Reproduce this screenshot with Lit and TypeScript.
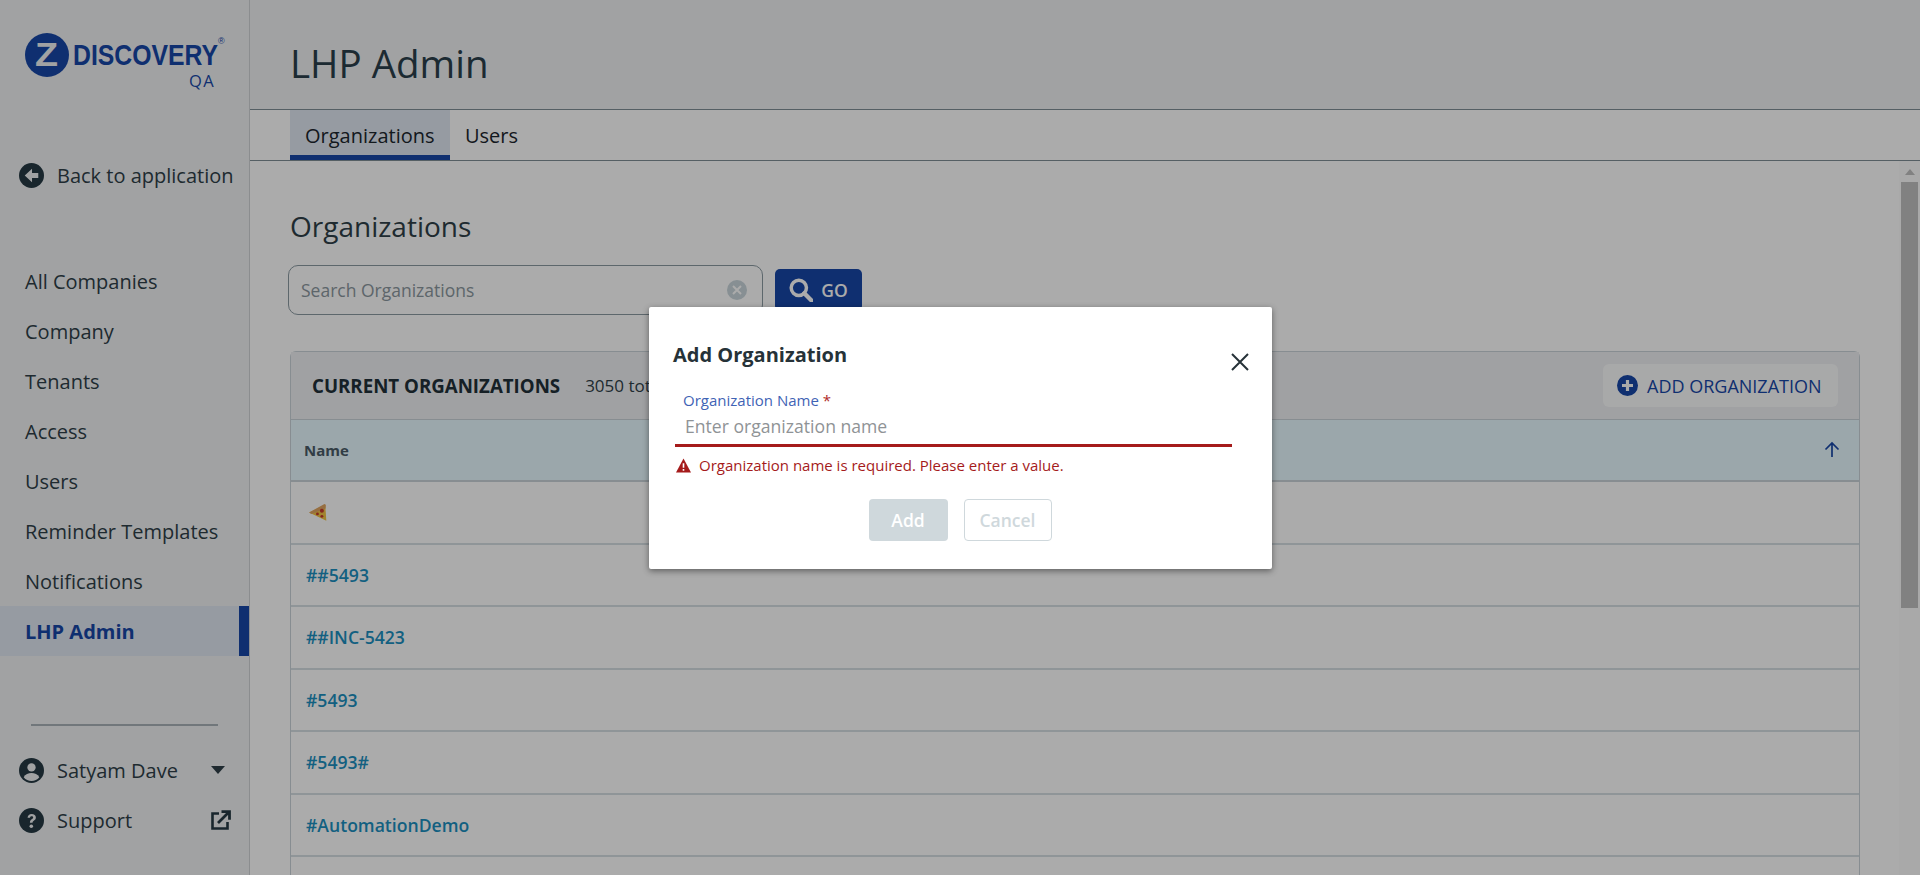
import { LitElement, html, css } from "lit";
import { customElement } from "lit/decorators.js";

const NAV = ["All Companies", "Company", "Tenants", "Access", "Users", "Reminder Templates", "Notifications", "LHP Admin"];
const ROWS = ["##5493", "##INC-5423", "#5493", "#5493#", "#AutomationDemo", ""];

@customElement("app-root")
export class AppRoot extends LitElement {
  static styles = css`
    :host { display: block; position: relative; width: 1920px; height: 875px; overflow: hidden; background: #fff;
      font-family: "Open Sans", "Noto Sans", sans-serif; color: #2f3f48; }
    * { box-sizing: border-box; }
    .page { display: flex; height: 875px; }
    .side { width: 250px; flex: none; background: #f0f2f4; border-right: 1px solid #cfd3d6; display: flex; flex-direction: column; }
    .logo { height: 110px; padding: 30px 0 0 23px; flex: none; }
    .logo svg { display: block; }
    .back { display: flex; align-items: center; gap: 13px; margin: 51px 0 0 19px; height: 28px; font-size: 20px; white-space: nowrap; }
    .back svg, .foot svg.c { width: 25px; height: 25px; flex: none; }
    .nav { margin-top: 67px; }
    .nav div { height: 50px; padding-left: 25px; display: flex; align-items: center; font-size: 20px; }
    .nav .on { background: #e0e8f2; color: #1747a7; font-weight: 700; border-right: 10px solid #1747a7; }
    .rule { height: 2px; background: #a9b2b8; margin: 68px 0 0 31px; width: 187px; }
    .foot { display: flex; align-items: center; margin: 0 0 0 19px; height: 50px; font-size: 20px; }
    .foot span { margin-left: 13px; flex: 1; }
    .foot.first { margin-top: 19px; }
    .caret { width: 0; height: 0; border: 7.5px solid transparent; border-top: 8px solid #2f3f48; border-bottom: 0; margin-right: 24px; }
    .ext { width: 21px; height: 21px; margin-right: 18px; }
    .main { flex: 1; min-width: 0; display: flex; flex-direction: column; }
    .head { height: 110px; flex: none; background: #f0f2f4; border-bottom: 1px solid #7f8e96; padding: 40px 0 0 40px; }
    .head h1 { margin: 0; font-size: 38.500px; line-height: 46px; font-weight: 500; color: #2b3f4b; }
    .tabs { height: 51px; flex: none; display: flex; padding-left: 40px; border-bottom: 1px solid #7f8e96; }
    .tab { padding: 0 15px; font-size: 20px; display: flex; align-items: center; height: 50px; color: #1c262d; }
    .tab.on { background: #e0e8f2; border-bottom: 5px solid #1747a7; padding-top: 5px; width: 160px; }
    .body { flex: 1; display: flex; min-height: 0; }
    .content { flex: 1; min-width: 0; padding: 46px 39px 0 40px; overflow: hidden; }
    .content h2 { margin: 0; font-size: 28px; line-height: 38px; font-weight: 400; color: #2f3f48; }
    .search { display: flex; margin: 20px 0 0 -2px; align-items: center; }
    .box { width: 475px; height: 50px; border: 1px solid #8b9aa2; border-radius: 10px; display: flex; align-items: center; padding: 0 15px 0 12px; font-size: 17.500px; color: #8b979e; justify-content: space-between; }
    .clear { width: 20px; height: 20px; }
    .go { margin-left: 12px; width: 87px; height: 42px; background: #1747a7; color: #fff; border-radius: 5px; font-weight: 600; font-size: 17.500px; display: flex; align-items: center; justify-content: center; gap: 8px; }
    .table { margin-top: 36px; border: 1px solid #c9d3d8; border-bottom: 0; border-radius: 6px 6px 0 0; }
    .thead { height: 68px; background: #eff0f3; display: flex; align-items: center; padding: 0 21px 0 21px; border-bottom: 1px solid #c9d3d8; }
    .thead b { font-size: 18.700px; font-weight: 700; color: #223039; }
    .thead .tot { margin-left: 25px; font-size: 17px; color: #2f3f48; flex: 1; }
    .addorg { width: 235px; height: 43px; background: #fbfcfd; border-radius: 6px; display: flex; align-items: center; padding-left: 14px; gap: 9px; font-size: 18px; color: #1747a7; white-space: nowrap; }
    .addorg svg { width: 21px; height: 21px; }
    .cols { height: 62px; background: #e8f9ff; display: flex; align-items: center; justify-content: space-between; padding: 0 18px 0 13px; border-bottom: 2px solid #c9d3d8; font-size: 15px; font-weight: 700; color: #4a5c68; }
    .cols svg { width: 18px; height: 18px; }
    .row { height: 62.500px; padding-left: 15px; display: flex; align-items: center; border-bottom: 2px solid #d6dfe3; font-size: 17.600px; font-weight: 600; color: #1c90c0; }
    .row svg { width: 20px; height: 20px; margin: 1px 0 0 2px; }
    .sb { width: 21px; flex: none; background: #fdfdfd; display: flex; flex-direction: column; align-items: center; }
    .sb i { display: block; width: 0; height: 0; border: 5px solid transparent; border-bottom: 6px solid #c0c0c0; border-top: 0; margin: 8px 0 7px; }
    .sb u { display: block; width: 17px; height: 426px; background: #c0c0c0; }
    .shade { position: absolute; inset: 0; background: rgba(0, 0, 0, .33); }
    .modal { position: absolute; left: 649px; top: 307px; width: 623px; height: 262px; background: #fff; border-radius: 2px;
      box-shadow: 0 2px 6px rgba(0,0,0,.45); padding: 34px 22px 0 24px; display: flex; flex-direction: column; }
    .mtop { display: flex; justify-content: space-between; align-items: flex-start; height: 28px; }
    .mtop h3 { margin: 0; font-size: 20px; line-height: 28px; font-weight: 700; color: #263238; }
    .mtop svg { width: 20px; height: 20px; margin-top: 11px; }
    .label { margin: 21px 0 0 10px; font-size: 15px; line-height: 20px; color: #3f63b5; }
    .label em { color: #b02a2a; font-style: normal; }
    .ph { margin: 4px 0 0 2px; height: 33px; border-bottom: 3px solid #a51b1b; font-size: 17.600px; color: #8f9396; padding-left: 10px; line-height: 24px; width: 557px; }
    .err { display: flex; align-items: center; gap: 8px; margin: 8px 0 0 3px; font-size: 15px; line-height: 20px; color: #a51b1b; }
    .err svg { width: 15px; height: 15px; }
    .btns { display: flex; justify-content: center; gap: 16px; margin-top: 24px; padding-right: 3px; }
    .btn { height: 42px; border-radius: 4px; display: flex; align-items: center; justify-content: center; font-size: 17.500px; font-weight: 600; }
    .btn.a { width: 79px; background: #cfd8dc; color: #fff; }
    .btn.c { width: 88px; border: 1px solid #cfd8dc; color: #cfd8dc; }
  `;

  render() {
    return html`
      <div class="page">
        <aside class="side">
          <div class="logo">
            <svg width="205" height="70" viewBox="0 0 205 70">
              <circle cx="24" cy="25" r="22" fill="#1747a7"></circle>
              <text x="12" y="36" font-family="Liberation Sans" font-weight="700" font-size="33" fill="#f0f2f4" textLength="23" lengthAdjust="spacingAndGlyphs">Z</text>
              <text transform="translate(50 35) scale(.855 1)" font-family="Liberation Sans" font-weight="700" font-size="29" fill="#1747a7">DISCOVERY</text>
              <text x="195" y="14" font-family="Liberation Sans" font-size="9" fill="#1747a7">®</text>
              <text x="166" y="57" font-family="Open Sans" font-weight="500" font-size="16.500" letter-spacing="1.500" fill="#1747a7">QA</text>
            </svg>
          </div>
          <div class="back">
            <svg viewBox="0 0 24 24"><circle cx="12" cy="12" r="12" fill="#263a44"></circle><path d="M12.500 5.500 5.500 12l7 6.500v-4h6v-5h-6z" fill="#f0f2f4"></path></svg>
            Back to application
          </div>
          <nav class="nav">
            ${NAV.map((n, i) => html`<div class=${i === 7 ? "on" : ""}>${n}</div>`)}
          </nav>
          <div class="rule"></div>
          <div class="foot first">
            <svg class="c" viewBox="0 0 24 24"><circle cx="12" cy="12" r="12" fill="#263a44"></circle><circle cx="12" cy="9" r="4" fill="#f0f2f4"></circle><path d="M4.500 18.500c1.500-3 4.500-4 7.500-4s6 1 7.500 4C17.500 21 15 22 12 22s-5.500-1-7.500-3.500z" fill="#f0f2f4"></path></svg>
            <span>Satyam Dave</span><div class="caret"></div>
          </div>
          <div class="foot">
            <svg class="c" viewBox="0 0 24 24"><circle cx="12" cy="12" r="12" fill="#263a44"></circle><path d="M8.200 9.300C8.400 7 10 5.700 12.200 5.700c2.300 0 4 1.400 4 3.400 0 1.500-.8 2.300-2 3.100-1 .7-1.200 1-1.200 2h-2.500c0-1.700.4-2.400 1.700-3.300.9-.6 1.400-1 1.400-1.700 0-.8-.6-1.300-1.500-1.300-1 0-1.500.6-1.600 1.400z" fill="#f0f2f4"></path><circle cx="11.800" cy="17.600" r="1.700" fill="#f0f2f4"></circle></svg>
            <span>Support</span>
            <svg class="ext" viewBox="0 0 21 21"><path d="M9 3.500H2.500v15h15V12" fill="none" stroke="#263a44" stroke-width="2.600"></path><path d="M8 13 18 3M11.500 1.700h8v8" fill="none" stroke="#263a44" stroke-width="2.800"></path></svg>
          </div>
        </aside>
        <div class="main">
          <header class="head"><h1>LHP Admin</h1></header>
          <div class="tabs"><div class="tab on">Organizations</div><div class="tab">Users</div></div>
          <div class="body">
            <div class="content">
              <h2>Organizations</h2>
              <div class="search">
                <div class="box">Search Organizations
                  <svg class="clear" viewBox="0 0 20 20"><circle cx="10" cy="10" r="10" fill="#c9d6dc"></circle><path d="m6 6 8 8M14 6l-8 8" stroke="#fff" stroke-width="2"></path></svg>
                </div>
                <div class="go">
                  <svg width="24" height="24" viewBox="1 1 22 22"><circle cx="10" cy="10" r="7" fill="none" stroke="#fff" stroke-width="3.200"></circle><path d="m15 15 7 7" stroke="#fff" stroke-width="4" stroke-linecap="round"></path></svg>
                  GO
                </div>
              </div>
              <div class="table">
                <div class="thead">
                  <b>CURRENT ORGANIZATIONS</b><span class="tot">3050 total</span>
                  <div class="addorg">
                    <svg viewBox="0 0 21 21"><circle cx="10.500" cy="10.500" r="10.500" fill="#1747a7"></circle><path d="M10.500 5v11M5 10.500h11" stroke="#fbfcfd" stroke-width="3.200"></path></svg>
                    ADD ORGANIZATION
                  </div>
                </div>
                <div class="cols">Name
                  <svg viewBox="0 0 18 18"><path d="M9 16V2M2.500 8.500 9 2l6.500 6.500" fill="none" stroke="#1747a7" stroke-width="1.700"></path></svg>
                </div>
                <div class="row">
                  <svg viewBox="0 0 18 18"><path d="M1 8.500 15.500 1.500 16.500 16z" fill="#f2c443"></path><path d="M1 8.500 14.800 1c.8 0 1.200.7 1.200 1.500L15.800 5 3 10z" fill="#e0a562"></path><circle cx="12.500" cy="7" r="1.800" fill="#c63a2c"></circle><circle cx="8.500" cy="9.800" r="1.300" fill="#c63a2c"></circle><circle cx="12.500" cy="12" r="1.300" fill="#c63a2c"></circle></svg>
                </div>
                ${ROWS.map((r) => html`<div class="row">${r}</div>`)}
              </div>
            </div>
            <div class="sb"><i></i><u></u></div>
          </div>
        </div>
      </div>
      <div class="shade"></div>
      <div class="modal">
        <div class="mtop">
          <h3>Add Organization</h3>
          <svg viewBox="0 0 20 20"><path d="m2 2 16 16M18 2 2 18" stroke="#263238" stroke-width="2" fill="none"></path></svg>
        </div>
        <div class="label">Organization Name <em>*</em></div>
        <div class="ph">Enter organization name</div>
        <div class="err">
          <svg viewBox="0 0 13 13"><path d="M6.500.5 13 12.500H0z" fill="#a51b1b"></path><path d="M6.500 4.500v4M6.500 9.500v1.500" stroke="#fff" stroke-width="1.400"></path></svg>
          Organization name is required. Please enter a value.
        </div>
        <div class="btns"><div class="btn a">Add</div><div class="btn c">Cancel</div></div>
      </div>
    `;
  }
}
